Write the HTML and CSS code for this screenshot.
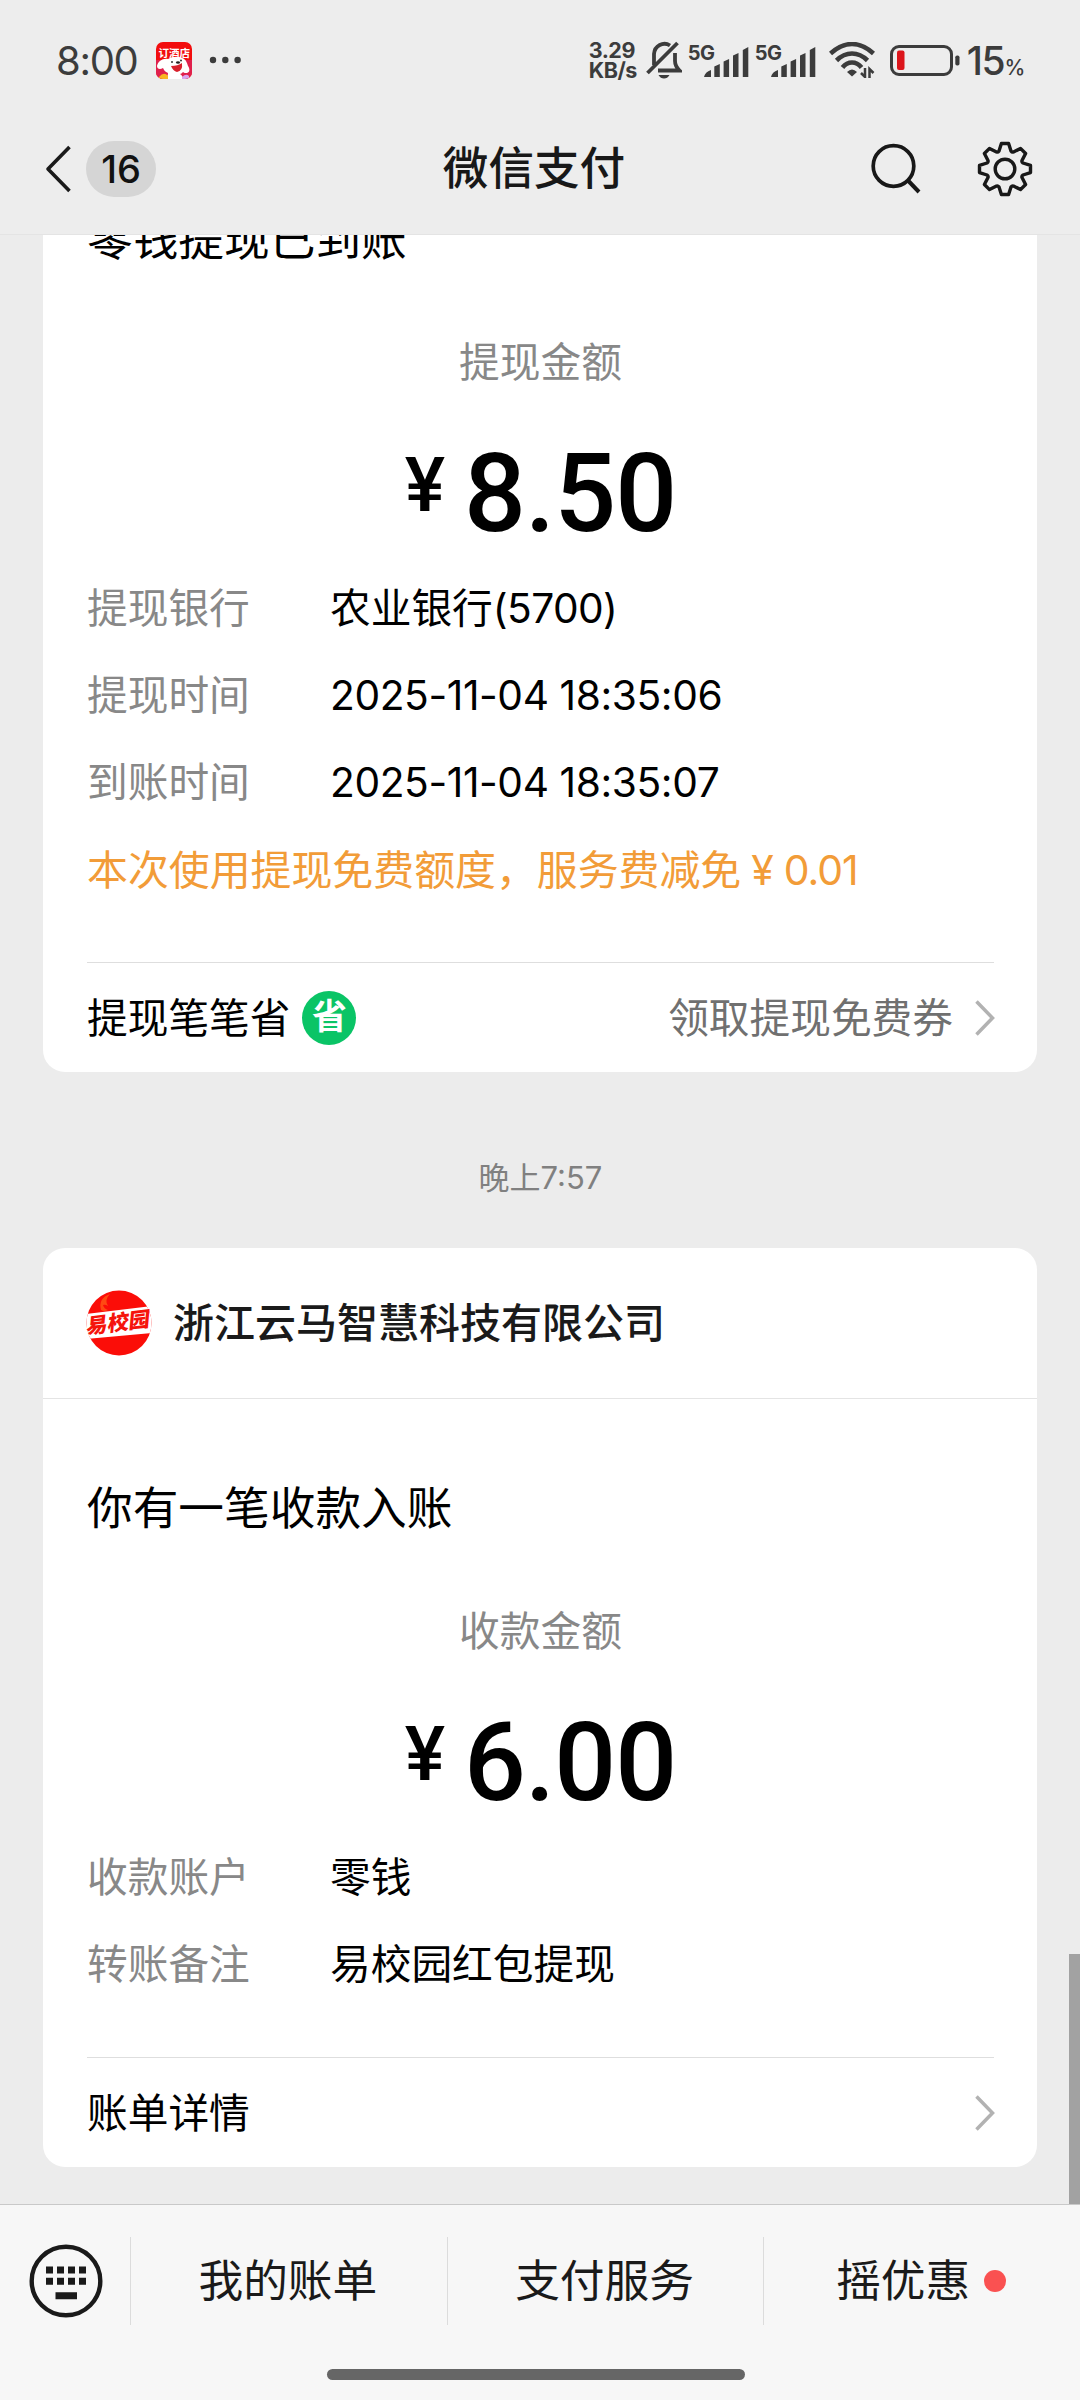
FILE: index.html
```html
<!DOCTYPE html>
<html lang="zh-CN">
<head>
<meta charset="utf-8">
<title>微信支付</title>
<link rel="stylesheet" href="styles.css">
</head>
<body>
<div class="screen">
  <header class="top">
    <div class="status">
      <span class="clock">8:00</span>
      <svg class="app-icon" viewBox="0 0 36 37">
        <defs><clipPath id="app-clip"><rect width="36" height="37" rx="7"/></clipPath></defs>
        <g clip-path="url(#app-clip)">
          <rect width="36" height="37" fill="#f20d0d"/>
          <path d="M0 18h36v19H0z" fill="#e0204c"/>
          <path d="M8 37c3-2 4-3 4-6-3-1-4-3-5-5-3 2-6 1-6-2 1-5 6-8 11-7 5-3 12-3 16 0 2 1 3 4 4 7 2 3 2 6-1 7-2 0-3 0-4-1-1 1-2 2-3 2 2 1 3 3 3 5z" fill="#fff"/>
          <path d="M15 24q7 0 11-3 1 8-5 9-4-1-6-6z" fill="#d8202c"/>
          <circle cx="16" cy="20" r="1" fill="#333"/><circle cx="25" cy="18.500" r="1" fill="#333"/><ellipse cx="22" cy="20.500" rx="2" ry="1.200" fill="#222"/>
          <path d="M3 35q5-6 9-1v3H3z" fill="#f9b522"/>
          <path d="M26 35q4-4 7-1v3h-7z" fill="#d9a5ee"/>
          <text class="app-text" x="2.500" y="14.500">订酒店</text>
        </g>
      </svg>
      <svg class="more" viewBox="0 0 32 8" fill="#3c3c3c"><circle cx="4" cy="4" r="3.200"/><circle cx="16.300" cy="4" r="3.200"/><circle cx="28.600" cy="4" r="3.200"/></svg>
      <span class="spacer"></span>
      <span class="speed"><span>3.29</span><span>KB/s</span></span>
      <svg class="bell" viewBox="0 0 36 40" fill="none" stroke="#3c3c3c" stroke-width="3.800">
        <path d="M8 25V14a10.500 11 0 0 1 16-8.500M29 13v8c0 5 2 7 4.500 9.500H12M1.500 33 31.500 3"/>
        <path d="M12.500 35h11q-2 3.500-5.500 3.500T12.500 35z" fill="#3c3c3c" stroke="none"/>
      </svg>
      <span class="net"><span class="gen">5G</span>
        <svg class="bars" viewBox="0 0 45 30" fill="#3c3c3c"><path d="M0 30q1-5 7-7v7zM10.300 19.500l5.500-2.500v13h-5.500zM19.600 14.500l5.500-2.500v18h-5.500zM29 8.500 34.500 6v24H29zM38.800 3 44.300 0v30h-5.500z"/></svg></span>
      <span class="net"><span class="gen">5G</span>
        <svg class="bars" viewBox="0 0 45 30" fill="#3c3c3c"><path d="M0 30q1-5 7-7v7zM10.300 19.500l5.500-2.500v13h-5.500zM19.600 14.500l5.500-2.500v18h-5.500zM29 8.500 34.500 6v24H29zM38.800 3 44.300 0v30h-5.500z"/></svg></span>
      <svg class="wifi" viewBox="0 0 46 36" fill="none" stroke="#3c3c3c">
        <path d="M1.500 11.500Q12 2 23 2t21.500 9.500" stroke-width="4.600"/>
        <path d="M7.500 18.500Q14.500 11.500 23 11.500T38.500 18.500M13.500 25.500Q17.500 20.500 23 20.500T32.500 25.500" stroke-width="4.600"/>
        <path d="M18 30q5-5 10 0l-5 4.500z" fill="#3c3c3c" stroke="none"/>
        <path d="M36 26v9l-4-4M40.500 36v-9l4 4" stroke-width="2.500"/>
      </svg>
      <svg class="battery" viewBox="0 0 70 31">
        <rect x="1.500" y="1.500" width="60" height="28" rx="7.500" fill="none" stroke="#3c3c3c" stroke-width="3"/>
        <rect x="7" y="5.500" width="7.500" height="19.500" rx="2" fill="#dc151b"/>
        <rect x="65.300" y="10.500" width="4.200" height="10" rx="1.800" fill="#3c3c3c"/>
      </svg>
      <span class="level">15<small>%</small></span>
    </div>
    <nav class="nav">
      <div class="nav-side">
        <svg class="back" viewBox="0 0 26 48" fill="none" stroke="#1a1a1a" stroke-width="3.600" stroke-linejoin="round"><path d="M24.500 2 3 24l21.500 22"/></svg>
        <span class="unread">16</span>
      </div>
      <h1 class="title">微信支付</h1>
      <div class="nav-side right">
        <svg class="search" viewBox="0 0 50 52" fill="none" stroke="#181818" stroke-width="3.700"><circle cx="22.500" cy="23" r="20.300"/><path d="M37 37.500 48 49" stroke-width="4"/></svg>
        <svg class="gear" viewBox="-28 -28 56 56" fill="none" stroke="#181818" stroke-width="3.400" stroke-linejoin="round">
          <path d="M-6-18-3.600-25.500H3.600L6-18Q7-16.500 8.500-17L15.500-20.600 20.600-15.500 17-8.500Q16.500-7 18-6L25.500-3.600V3.600L18 6Q16.500 7 17 8.500L20.600 15.500 15.500 20.600 8.500 17Q7 16.500 6 18L3.600 25.500H-3.600L-6 18Q-7 16.500-8.500 17L-15.500 20.600-20.600 15.500-17 8.500Q-16.500 7-18 6L-25.500 3.600V-3.600L-18-6Q-16.500-7-17-8.500L-20.600-15.500-15.500-20.600-8.500-17Q-7-16.500-6-18z"/>
          <circle r="9.800"/>
        </svg>
      </div>
    </nav>
  </header>

  <main class="feed">
    <section class="card first">
      <h2 class="headline">零钱提现已到账</h2>
      <p class="caption">提现金额</p>
      <p class="amount"><span class="yen">¥</span>8.50</p>
      <dl class="facts">
        <dt>提现银行</dt><dd>农业银行<span class="num bank">(5700)</span></dd>
        <dt>提现时间</dt><dd class="num">2025-11-04 18:35:06</dd>
        <dt>到账时间</dt><dd class="num">2025-11-04 18:35:07</dd>
      </dl>
      <p class="note">本次使用提现免费额度，服务费减免<span class="fee">¥</span><span class="small-num">0.01</span></p>
      <div class="link">
        <span>提现笔笔省</span><span class="badge">省</span>
        <span class="hint">领取提现免费券</span>
        <svg class="chevron" viewBox="0 0 20 36" fill="none" stroke="#b2b2b2" stroke-width="3.500"><path d="M1.500 1.500 17.500 18 1.500 34.500"/></svg>
      </div>
    </section>

    <p class="stamp">晚上<span>7:57</span></p>

    <section class="card">
      <div class="sender">
        <svg class="logo" viewBox="0 0 66 66">
          <defs><clipPath id="logo-clip"><circle cx="33" cy="33" r="32.500"/></clipPath></defs>
          <g clip-path="url(#logo-clip)"><rect width="66" height="66" fill="#fb0d08"/><path d="M15 20q-3-12 9-16-6 6-2 12-3-2-5-1 1 4 5 5-4 2-7 0z" fill="#ff4a12"/><path d="M0 24 66 16v27L0 49z" fill="#fff"/></g>
          <text class="logo-text" transform="translate(0 44) rotate(-7) skewX(-12)" textLength="64" lengthAdjust="spacingAndGlyphs">易校园</text>
        </svg>
        <span class="sender-name">浙江云马智慧科技有限公司</span>
      </div>
      <h2 class="headline">你有一笔收款入账</h2>
      <p class="caption">收款金额</p>
      <p class="amount"><span class="yen">¥</span>6.00</p>
      <dl class="facts">
        <dt>收款账户</dt><dd>零钱</dd>
        <dt>转账备注</dt><dd>易校园红包提现</dd>
      </dl>
      <div class="link">
        <span>账单详情</span>
        <svg class="chevron end" viewBox="0 0 20 36" fill="none" stroke="#b2b2b2" stroke-width="3.500"><path d="M1.500 1.500 17.500 18 1.500 34.500"/></svg>
      </div>
    </section>
    <div class="scrollbar"></div>
  </main>

  <footer class="bottom">
    <div class="menu">
      <div class="keyboard">
        <svg viewBox="0 0 74 74" fill="#1a1a1a"><circle cx="37" cy="37" r="34.300" fill="none" stroke="#1a1a1a" stroke-width="4.400"/><path d="M17 22.500h7v7h-7zM28 22.500h7v7h-7zM39 22.500h7v7h-7zM50 22.500h7v7h-7zM17 33.700h7v7h-7zM28 33.700h7v7h-7zM39 33.700h7v7h-7zM50 33.700h7v7h-7zM26.500 48.200h21.500v7H26.500z"/></svg>
      </div>
      <div class="item">我的账单</div>
      <div class="item">支付服务</div>
      <div class="item">摇优惠<i class="dot"></i></div>
    </div>
    <div class="home"></div>
  </footer>
</div>
</body>
</html>
```
FILE: styles.css
```css
* { box-sizing: border-box; margin: 0; padding: 0; }
body { font-family: Inter, "Noto Sans CJK SC", sans-serif; background: #ececec; color: #000; }
svg { display: block; flex: none; }
.screen { width: 1080px; height: 2400px; display: flex; flex-direction: column; overflow: hidden; background: #ececec; }
.top { height: 235px; flex: none; background: #ededed; border-bottom: 1px solid #e4e4e4; }
.status { height: 122px; display: flex; align-items: center; padding: 0 56px 2px 56px; color: #3c3c3c; }
.clock { font-size: 40px; width: 100px; letter-spacing: -1.300px; }
.app-icon { width: 36px; height: 37px; }
.app-text { font: 700 10.500px "Noto Sans CJK SC", sans-serif; fill: #fff; }
.more { width: 32px; height: 8px; margin-left: 17px; }
.spacer { flex: 1; }
.speed { display: flex; flex-direction: column; width: 57px; font-size: 21.500px; line-height: 20px; font-weight: 700; letter-spacing: -0.500px; white-space: nowrap; }
.bell { width: 36px; height: 40px; }
.net { display: flex; width: 61px; height: 34px; margin-left: 6px; position: relative; }
.gen { font-size: 20px; line-height: 20px; font-weight: 700; letter-spacing: -0.500px; }
.bars { width: 45px; height: 30px; position: absolute; right: 0; bottom: 0; }
.wifi { width: 46px; height: 36px; margin-left: 13px; }
.battery { width: 70px; height: 31px; margin-left: 15px; }
.level { font-size: 39px; margin-left: 7px; font-weight: 500; letter-spacing: -1.300px; white-space: nowrap; }
.level small { font-size: 21px; }
.nav { height: 94px; display: grid; grid-template-columns: 1fr auto 1fr; align-items: center; padding: 0 47px 0 45px; }
.nav-side { display: flex; align-items: center; }
.nav-side.right { justify-content: flex-end; }
.back { width: 26px; height: 48px; }
.unread { width: 70px; height: 56px; margin-left: 15px; border-radius: 28px; background: #d5d5d5; font-size: 38px; line-height: 56px; font-weight: 500; text-align: center; color: #111; }
.title { font-size: 45.600px; font-weight: 500; color: #181818; margin: 0 5px 0 -5px; padding-bottom: 8px; }
.search { width: 50px; height: 52px; }
.gear { width: 56px; height: 56px; margin-left: 56px; }
.feed { flex: 1; min-height: 0; overflow: hidden; padding: 0 43px; position: relative; }
.card { background: #fff; border-radius: 22px; padding: 0 43px 0 44px; height: 919px; }
.card.first { height: 918px; margin-top: -81px; padding-top: 56px; }
.headline { font-size: 45.700px; font-weight: 400; line-height: 60px; }
.caption { font-size: 40.700px; line-height: 60px; color: #888; text-align: center; margin-top: 63px; }
.amount { font: 500 109px/110px Roboto, sans-serif; letter-spacing: -1px; text-align: center; margin-top: 46px; display: flex; justify-content: center; }
.yen { font-size: 76px; line-height: 92px; margin-right: 20px; }
.facts { display: grid; grid-template-columns: 243px 1fr; font-size: 40.700px; line-height: 60px; row-gap: 27px; margin-top: 30px; }
.facts dt { color: #888; }
.num { letter-spacing: -0.400px; }
.bank { letter-spacing: -0.600px; }
.small-num { letter-spacing: -1px; }
.note { font-size: 40.900px; line-height: 60px; margin-top: 27px; color: #f29c38; white-space: nowrap; }
.fee { margin: 0 10px; }
.link { display: flex; align-items: center; height: 110px; border-top: 1px solid #dedede; margin-top: 62px; font-size: 40.700px; }
.link > span:not(.badge) { padding-bottom: 4px; }
.badge { width: 54px; height: 54px; border-radius: 50%; background: #0ac466; color: #fff; font-size: 35px; font-weight: 700; line-height: 50px; text-align: center; margin-left: 12px; }
.hint { margin-left: auto; color: #707070; }
.chevron { width: 20px; height: 36px; margin: 0 -1px 0 22px; }
.chevron.end { margin-left: auto; }
.stamp { height: 176px; line-height: 212px; text-align: center; font-size: 31px; color: #808080; padding-left: 1px; }
.sender { display: flex; align-items: center; height: 151px; margin: 0 -43px 80px -44px; padding-left: 43px; border-bottom: 1px solid #e4e4e4; }
.logo { width: 66px; height: 66px; overflow: visible; }
.logo-text { font: 900 21px "Noto Sans CJK SC", sans-serif; fill: #f5140c; }
.sender-name { margin-left: 21px; padding-bottom: 6px; font-size: 41px; font-weight: 500; color: #1a1a1a; }
.scrollbar { position: absolute; right: 0; bottom: 0; width: 11px; height: 250px; background: #a2a2a2; }
.bottom { height: 196px; flex: none; background: #f7f7f7; border-top: 1px solid #c9c9c9; }
.menu { display: flex; align-items: center; height: 150px; padding-top: 2px; }
.keyboard { width: 130px; height: 90px; padding: 8px 0 0 29px; }
.keyboard svg { width: 74px; height: 74px; }
.item { flex: 1; height: 88px; padding: 0 2px 8px 0; display: flex; align-items: center; justify-content: center; border-left: 1px solid #dcdcdc; font-size: 44.700px; color: #1a1a1a; }
.dot { width: 22px; height: 22px; border-radius: 50%; background: #fa5151; margin: 7px 0 0 14px; }
.home { width: 418px; height: 11px; margin: 14px 0 0 327px; border-radius: 6px; background: #666; }
```
